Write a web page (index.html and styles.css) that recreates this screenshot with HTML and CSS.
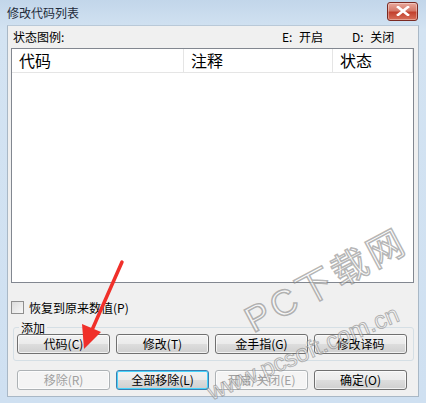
FILE: index.html
```html
<!DOCTYPE html>
<html lang="zh-CN">
<head>
    <meta charset="UTF-8">
    <title>修改代码列表</title>
    <link rel="stylesheet" href="styles.css">
</head>
<body>
    <div class="window">
        <div class="titlebar">
            <span class="title">修改代码列表</span>
            <span class="close-btn">
                <svg width="14" height="10" viewBox="0 0 14 10">
                    <path d="M2 1 L12 9 M12 1 L2 9" stroke="#fff" stroke-width="2.6" stroke-linecap="square"/>
                </svg>
            </span>
        </div>
        <div class="client">
            <div class="legend">
                <span>状态图例:</span>
                <span class="legend-keys"><span>E: 开启</span><span>D: 关闭</span></span>
            </div>
            <div class="listview">
                <div class="lv-header">
                    <div class="col col-code">代码</div>
                    <div class="col col-note">注释</div>
                    <div class="col col-state">状态</div>
                </div>
            </div>
            <label class="check">
                <span class="box"></span>恢复到原来数值(P)
            </label>
            <fieldset class="group">
                <legend>添加</legend>
                <div class="btn-row">
                    <button class="btn">代码(C)</button>
                    <button class="btn">修改(T)</button>
                    <button class="btn">金手指(G)</button>
                    <button class="btn">修改译码</button>
                </div>
            </fieldset>
            <div class="btn-row bottom-row">
                <button class="btn" disabled>移除(R)</button>
                <button class="btn focused">全部移除(L)</button>
                <button class="btn" disabled>开启/关闭(E)</button>
                <button class="btn">确定(O)</button>
            </div>
        </div>

        <!-- 指示箭头 -->
        <svg class="arrow" width="426" height="403" viewBox="0 0 426 403">
            <path d="M122 262 L92 330" stroke="#f0302a" stroke-width="3.5" stroke-linecap="round"/>
            <path d="M84 349 L82 324 L101 332 Z" fill="#f0302a"/>
        </svg>

        <!-- 水印 -->
        <div class="wm wm-big">PC下载网</div>
        <div class="wm wm-url">www.pcsoft.com.cn</div>
    </div>
</body>
</html>
```

FILE: styles.css
```css
body {
    margin: 0;
    font-family: "Noto Sans CJK SC", "Liberation Sans", sans-serif;
    font-size: 12px;
    color: #000;
}
.window {
    position: relative;
    width: 426px;
    height: 403px;
    overflow: hidden;
    background: linear-gradient(180deg, #c2d6ea 0%, #d3e3f2 30px, #cfe0f1 100%);
    display: flex;
    flex-direction: column;
}
.titlebar {
    height: 25px;
    display: flex;
    align-items: center;
    justify-content: space-between;
    padding: 0 8px 0 7px;
    flex-shrink: 0;
}
.title {
    font-size: 12px;
    color: #1e2b3a;
    margin-top: -1px;
}
.close-btn {
    width: 29px;
    height: 17px;
    margin-top: -3px;
    border: 1px solid #7a2a22;
    border-radius: 3px;
    background: linear-gradient(180deg, #e9a99c 0%, #d57a6a 45%, #c2412e 55%, #d8705a 100%);
    display: flex;
    align-items: center;
    justify-content: center;
    box-shadow: inset 0 0 0 1px rgba(255, 255, 255, 0.35);
}
.client {
    flex: 1;
    margin: 0 7px 6px 7px;
    background: #f0f0f0;
    border: 1px solid #a9b8c6;
    border-top-color: #b9c9d8;
    padding: 0 4px 0 3px;
    display: flex;
    flex-direction: column;
}
.legend {
    display: flex;
    justify-content: space-between;
    height: 22px;
    line-height: 22px;
    padding: 0 18px 0 2px;
}
.legend-keys {
    display: flex;
    gap: 26px;
}
.legend-keys span {
    width: 44px;
    white-space: nowrap;
    word-spacing: 4px;
}
.listview {
    height: 233px;
    background: #fff;
    border: 1px solid #828790;
}
.lv-header {
    display: flex;
    height: 23px;
    border-bottom: 1px solid #e5e5e5;
    font-size: 16px;
    line-height: 23px;
}
.col {
    padding-left: 7px;
    border-right: 1px solid #e5e5e5;
}
.col-code { width: 164px; }
.col-note { width: 141px; }
.col-state { width: 72px; }
.check {
    display: flex;
    align-items: center;
    margin-top: 16px;
    height: 16px;
}
.box {
    width: 11px;
    height: 11px;
    border: 1px solid #8f8f8f;
    background: linear-gradient(135deg, #dcdcdc, #f8f8f8);
    margin-right: 5px;
}
.group {
    margin: 6px 0 0 2px;
    padding: 0 3px 6px 3px;
    border: 1px solid #d5dfe5;
    border-radius: 3px;
}
.group legend {
    padding: 0 2px;
    margin-left: 2px;
    line-height: 13px;
}
.btn-row {
    display: flex;
    gap: 6px;
}
.btn {
    width: 93px;
    height: 20px;
    padding: 0;
    font-family: "Noto Sans CJK SC", "Liberation Sans", sans-serif;
    font-size: 12px;
    line-height: 18px;
    color: #000;
    border: 1px solid #707070;
    border-radius: 3px;
    background: linear-gradient(180deg, #f2f2f2 0%, #ebebeb 48%, #dddddd 52%, #cfcfcf 100%);
    box-shadow: inset 0 0 0 1px rgba(255, 255, 255, 0.7);
}
.btn:disabled {
    color: #a0a0a0;
    border-color: #adb2b5;
    background: #f4f4f4;
}
.btn.focused {
    border-color: #3c7fb1;
    box-shadow: inset 0 0 0 1px #48d3fb;
}
.bottom-row {
    margin: 9px 0 0 6px;
}
.arrow {
    position: absolute;
    left: 0;
    top: 0;
    pointer-events: none;
}
.wm {
    position: absolute;
    white-space: nowrap;
    pointer-events: none;
    font-family: "Liberation Sans", "Noto Sans CJK SC", sans-serif;
    transform-origin: 0 100%;
}
.wm-big {
    left: 258px;
    top: 290px;
    font-size: 36px;
    letter-spacing: 4px;
    transform: rotate(-28deg);
    color: rgba(255, 255, 255, 0.5);
    -webkit-text-stroke: 1.5px rgba(110, 110, 110, 0.5);
}
.wm-url {
    left: 214px;
    top: 378px;
    font-size: 24px;
    transform: rotate(-23deg);
    color: rgba(255, 255, 255, 0.5);
    -webkit-text-stroke: 1px rgba(110, 110, 110, 0.5);
}
```
